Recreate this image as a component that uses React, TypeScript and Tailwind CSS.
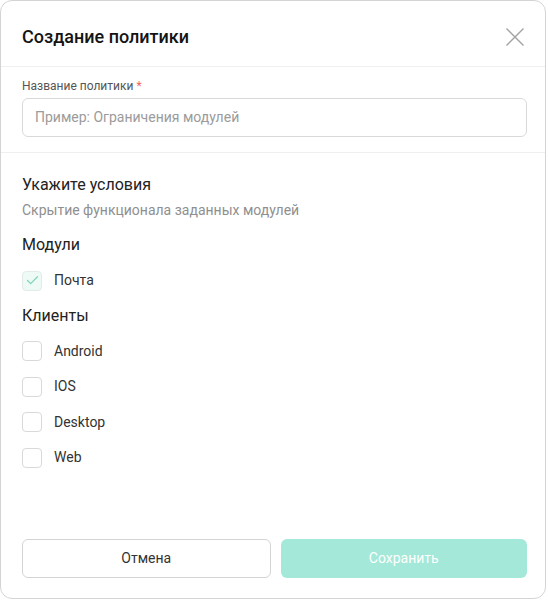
import { Check } from "lucide-react";

const clients = ["Android", "IOS", "Desktop", "Web"];

function Box({ checked }: { checked?: boolean }) {
  return (
    <span
      className={
        "flex h-5 w-5 items-center justify-center rounded-[4px] border " +
        (checked ? "border-[#e3ebe8] bg-[#eefaf5]" : "border-[#d9d9d9] bg-white")
      }
    >
      {checked && <Check className="h-[15px] w-[15px] text-[#7fd6b6]" strokeWidth={2} />}
    </span>
  );
}

function Row({ label, checked }: { label: string; checked?: boolean }) {
  return (
    <label className="flex h-[35.5px] items-center gap-[12px] text-[14px] text-[#333]">
      <Box checked={checked} />
      {label}
    </label>
  );
}

export default function App() {
  return (
    <div className="bg-white" style={{ fontFamily: "Roboto, 'Noto Sans', sans-serif" }}>
      <div className="flex h-[599px] w-[546px] flex-col overflow-hidden rounded-[12px] border border-[#d4d4d4] bg-white">
        <div className="flex items-center justify-between border-b border-[#efefef] pt-[23px] pr-[18px] pb-[16px] pl-[21px]">
          <h2 className="text-[18px] leading-[26px] font-medium text-[#141414]">Создание политики</h2>
          <svg className="mr-[2px] h-[20px] w-[20px] text-[#a3a3a3]" viewBox="0 0 20 20" fill="none" stroke="currentColor" strokeWidth={1.4}>
            <path d="M1.5 1.5l17 17M18.5 1.5l-17 17" />
          </svg>
        </div>

        <div className="border-b border-[#efefef] pt-[11px] pr-[18px] pb-[15px] pl-[21px]">
          <div className="text-[12px] leading-[16px] text-[#555]">
            Название политики <span className="text-[#f0665c]">*</span>
          </div>
          <div className="mt-[4px] flex h-[39px] items-center rounded-[6px] border border-[#d9d9d9] px-[12px] text-[14px] text-[#9b9b9b]">
            Пример: Ограничения модулей
          </div>
        </div>

        <div className="flex flex-1 flex-col pt-[20px] pr-[18px] pl-[21px]">
          <h3 className="text-[16px] leading-[24px] text-[#222]">Укажите условия</h3>
          <p className="mt-[3px] text-[14px] leading-[20px] text-[#8f8f8f]">Скрытие функционала заданных модулей</p>
          <h3 className="mt-[13px] text-[16px] leading-[24px] text-[#222]">Модули</h3>
          <div className="mt-[6px]">
            <Row label="Почта" checked />
          </div>
          <h3 className="mt-[5px] text-[16px] leading-[24px] text-[#222]">Клиенты</h3>
          <div className="mt-[6px] flex flex-col">
            {clients.map((c) => (
              <Row key={c} label={c} />
            ))}
          </div>

          <div className="mt-auto mb-[20px] flex gap-[10px]">
            <button className="h-[39px] flex-1 rounded-[6px] border border-[#d4d4d4] bg-white text-[14px] text-[#333]">
              Отмена
            </button>
            <button className="h-[39px] flex-1 rounded-[6px] bg-[#a3e8d8] text-[14px] text-white">
              Сохранить
            </button>
          </div>
        </div>
      </div>
    </div>
  );
}
